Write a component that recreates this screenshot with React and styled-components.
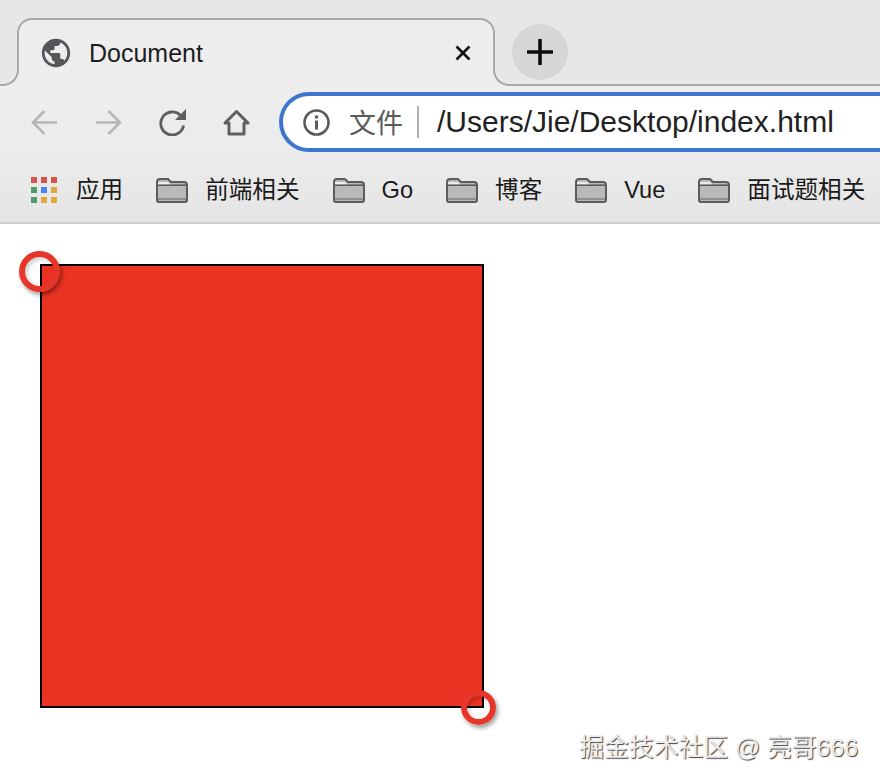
import React from 'react';
import styled, { createGlobalStyle } from 'styled-components';
import { MdPublic } from 'react-icons/md';

const STRIP = '#e7e7e7';
const LIGHT = '#eeeeef';
const LINE = '#a8a8a8';
const FONT = '"Liberation Sans", "Noto Sans CJK SC", sans-serif';

const GlobalStyle = createGlobalStyle`
  html, body {
    margin: 0;
    padding: 0;
    background: #fff;
  }
  * {
    box-sizing: border-box;
  }
`;

const Window = styled.div`
  position: relative;
  width: 880px;
  height: 784px;
  overflow: hidden;
  font-family: ${FONT};
  color: #222;
`;

const TabStrip = styled.div`
  display: flex;
  align-items: flex-start;
  height: 86px;
  padding-left: 17px;
  background: ${STRIP};
  border-bottom: 2px solid ${LINE};
`;

const Tab = styled.div`
  position: relative;
  display: flex;
  align-items: center;
  width: 478px;
  height: 68px;
  margin-top: 18px;
  padding: 0 22px 0 20px;
  background: ${LIGHT};
  border: 2px solid ${LINE};
  border-bottom: none;
  border-radius: 15px 15px 0 0;

  &::before,
  &::after {
    content: '';
    position: absolute;
    bottom: 0;
    width: 16px;
    height: 16px;
  }
  &::before {
    left: -16px;
    background: radial-gradient(circle at 0 0, ${STRIP} 13.6px, ${LINE} 14.2px, ${LINE} 15.6px, ${LIGHT} 16.2px);
  }
  &::after {
    right: -16px;
    background: radial-gradient(circle at 100% 0, ${STRIP} 13.6px, ${LINE} 14.2px, ${LINE} 15.6px, ${LIGHT} 16.2px);
  }
`;

const TabTitle = styled.span`
  margin-left: 16px;
  font-size: 25px;
  line-height: 30px;
  color: #1d1d1d;
`;

const CloseIcon = styled.svg`
  display: block;
  width: 16px;
  height: 16px;
  margin-left: auto;
`;

const NewTab = styled.div`
  display: flex;
  align-items: center;
  justify-content: center;
  width: 56px;
  height: 56px;
  margin: 24px 0 0 17px;
  border-radius: 50%;
  background: #d6d6d6;
`;

const Toolbar = styled.div`
  display: flex;
  align-items: center;
  gap: 29px;
  height: 72px;
  padding-left: 31px;
  background: linear-gradient(${LIGHT}, #ebebec);
`;

const NavGroup = styled.div`
  display: flex;
  align-items: center;
  gap: 37px;
`;

const NavIcon = styled.svg`
  display: block;
  flex: none;
  width: 27px;
  height: 27px;
`;

const Omnibox = styled.div`
  display: flex;
  flex: none;
  align-items: center;
  width: 660px;
  height: 60px;
  padding-left: 20px;
  background: #fff;
  border: 4px solid #3d75cf;
  border-radius: 30px;
`;

const Scheme = styled.span`
  margin-left: 19px;
  padding-top: 3px;
  font-size: 27px;
  line-height: 34px;
  color: #5a5a5a;
`;

const Divider = styled.span`
  width: 2px;
  height: 32px;
  margin: 0 18px 0 14px;
  background: #b0b0b0;
`;

const Url = styled.span`
  font-size: 30px;
  line-height: 36px;
  color: #222;
`;

const BookmarkBar = styled.div`
  display: flex;
  align-items: center;
  height: 66px;
  padding-left: 31px;
  gap: 33px;
  background: linear-gradient(#ebebec, #e5e5e5);
  border-bottom: 2px solid #cfcfcf;
`;

const Bookmark = styled.div`
  display: flex;
  flex: none;
  align-items: center;
  gap: 17px;
  font-size: 23.6px;
  line-height: 32px;
  color: #1a1a1a;
  white-space: nowrap;
`;

const AppsGrid = styled.div`
  display: grid;
  grid-template-columns: repeat(3, 6px);
  grid-auto-rows: 6px;
  gap: 4px;
  width: 26px;
  margin-right: 2px;
`;

const AppsDot = styled.span`
  background: ${(p) => p.$color};
`;

const FolderIcon = styled.svg`
  display: block;
  width: 32px;
  height: 26px;
`;

const Page = styled.main`
  padding: 40px;
`;

const RedBox = styled.div`
  position: relative;
  width: 444px;
  height: 444px;
  background: #ea3323;
  border: 2px solid #000;
`;

const Handle = styled.span`
  position: absolute;
  width: ${(p) => p.$size}px;
  height: ${(p) => p.$size}px;
  border: ${(p) => p.$ring}px solid #e8352a;
  border-radius: 50%;
  box-shadow: 2px 3px 4px rgba(0, 0, 0, 0.38), inset 2px 2px 4px rgba(0, 0, 0, 0.22);
`;

const TopHandle = styled(Handle)`
  left: -23px;
  top: -15px;
`;

const BottomHandle = styled(Handle)`
  right: -14px;
  bottom: -19px;
`;

const Watermark = styled.div`
  position: absolute;
  right: 22px;
  bottom: 20px;
  font-size: 24.8px;
  line-height: 32px;
  color: #ececec;
  text-shadow: 1px 1px 1px rgba(0, 0, 0, 0.75);
  white-space: nowrap;
`;

const APPS = ['#d9534a', '#d9534a', '#d9534a', '#4f9a68', '#4285f4', '#e3a83d', '#4f9a68', '#e3a83d', '#e3a83d'];
const BOOKMARKS = ['前端相关', 'Go', '博客', 'Vue', '面试题相关'];

const Folder = () => (
  <FolderIcon viewBox="0 0 32 26">
    <path d="M1 5 a3 3 0 0 1 3-3 h8 l3 3 h13 a3 3 0 0 1 3 3 v15 a2 2 0 0 1-2 2 H3 a2 2 0 0 1-2-2 z" fill="#b9b9b9" stroke="#5c5c5c" strokeWidth="2" />
    <path d="M2 5 h10 l3 3 h15 v1 H2 z" fill="#ececec" />
    <path d="M2 8.2 h29" stroke="#5c5c5c" strokeWidth="1.6" />
    <path d="M2 22 h28" stroke="#8f8f8f" strokeWidth="2" />
  </FolderIcon>
);

export default function App() {
  return (
    <Window>
      <GlobalStyle />
      <TabStrip>
        <Tab>
          <MdPublic size={34} color="#55565a" />
          <TabTitle>Document</TabTitle>
          <CloseIcon viewBox="0 0 16 16">
            <path d="M1.5 1.5 L14.5 14.5 M14.5 1.5 L1.5 14.5" stroke="#111" strokeWidth="2.6" />
          </CloseIcon>
        </Tab>
        <NewTab>
          <svg width="26" height="26" viewBox="0 0 26 26">
            <path d="M13 1 V25 M1 13 H25" stroke="#0c0c0c" strokeWidth="3.6" strokeLinecap="round" />
          </svg>
        </NewTab>
      </TabStrip>
      <Toolbar>
        <NavGroup>
          <NavIcon viewBox="0 0 27 27" fill="none">
            <path d="M26 13.5 H2.5 M13.5 2 L2 13.5 L13.5 25" stroke="#b6b6b6" strokeWidth="2.6" />
          </NavIcon>
          <NavIcon viewBox="0 0 27 27" fill="none">
            <path d="M1 13.5 H24.5 M13.5 2 L25 13.5 L13.5 25" stroke="#b6b6b6" strokeWidth="2.6" />
          </NavIcon>
          <NavIcon viewBox="0 0 27 27" fill="none">
            <path d="M21.6 6.5 A11.5 11.5 0 1 0 24.6 16.5" stroke="#5f5f5f" strokeWidth="2.8" />
            <path d="M27 0 V11 H16 Z" fill="#5f5f5f" />
          </NavIcon>
          <NavIcon viewBox="0 0 27 27" fill="none">
            <path d="M13.5 2.5 L25 14 H21 V25 H6 V14 H2 Z" stroke="#5f5f5f" strokeWidth="3" strokeLinejoin="round" />
          </NavIcon>
        </NavGroup>
        <Omnibox>
          <NavIcon viewBox="0 0 27 27" fill="none">
            <circle cx="13.5" cy="13.5" r="12" stroke="#5a5a5a" strokeWidth="2.6" />
            <circle cx="13.5" cy="8" r="1.8" fill="#5a5a5a" />
            <rect x="12" y="11.5" width="3" height="9" fill="#5a5a5a" />
          </NavIcon>
          <Scheme>文件</Scheme>
          <Divider />
          <Url>/Users/Jie/Desktop/index.html</Url>
        </Omnibox>
      </Toolbar>
      <BookmarkBar>
        <Bookmark>
          <AppsGrid>
            {APPS.map((color, i) => (
              <AppsDot key={i} $color={color} />
            ))}
          </AppsGrid>
          应用
        </Bookmark>
        {BOOKMARKS.map((name) => (
          <Bookmark key={name}>
            <Folder />
            {name}
          </Bookmark>
        ))}
      </BookmarkBar>
      <Page>
        <RedBox>
          <TopHandle $size={41} $ring={6} />
          <BottomHandle $size={35} $ring={6} />
        </RedBox>
      </Page>
      <Watermark>掘金技术社区 @ 亮哥666</Watermark>
    </Window>
  );
}
